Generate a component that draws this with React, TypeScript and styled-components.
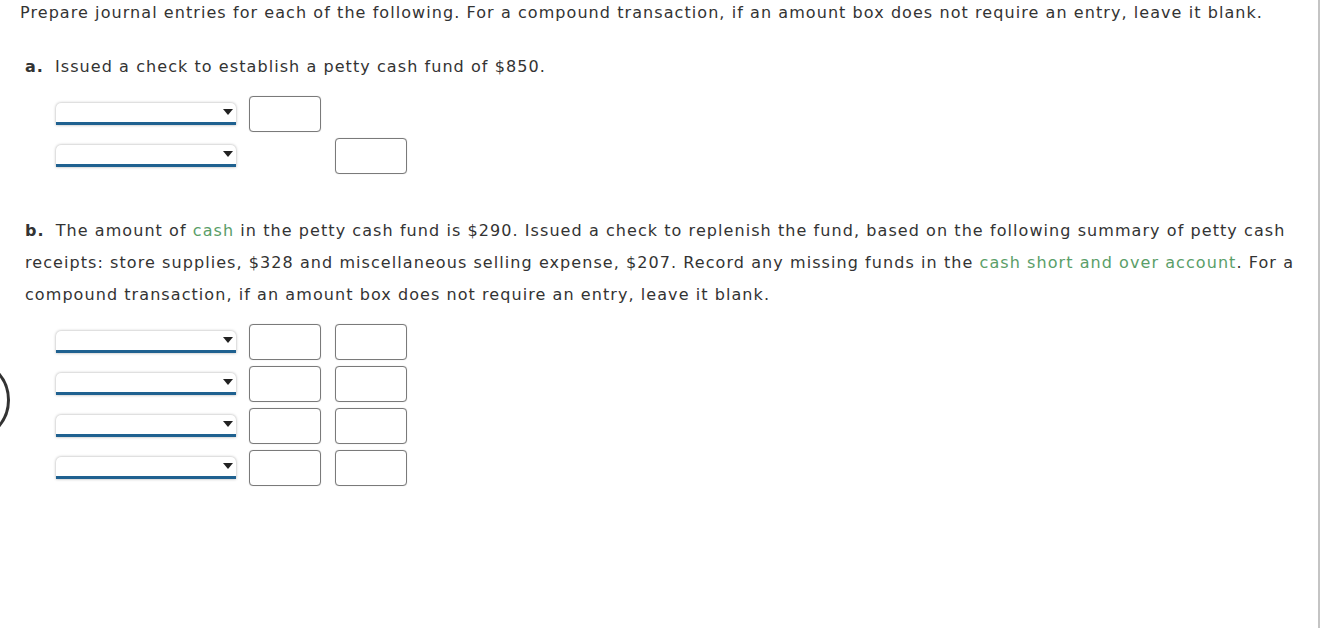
import React from "react";
import styled, { createGlobalStyle } from "styled-components";

const Global = createGlobalStyle`
  html, body { margin: 0; padding: 0; background: #fff; }
  body { font-family: Verdana, "DejaVu Sans", sans-serif; color: #333; }
`;

const Page = styled.div`
  position: relative;
  box-sizing: border-box;
  width: 1320px;
  height: 628px;
  overflow: hidden;
  border-right: 2px solid #c4c4c4;
  padding: 3px 0 0 20px;
`;

const Title = styled.p`
  margin: 0;
  font-size: 16px;
  line-height: 20px;
  letter-spacing: 1.07px;
  white-space: nowrap;
`;

const Section = styled.section<{ $top: number }>`
  margin-top: ${(p) => p.$top}px;
  padding-left: 5px;
`;

const Para = styled.p`
  margin: 0;
  font-size: 16px;
  line-height: 32px;
  letter-spacing: 1.07px;
  width: 1285px;
`;

const Label = styled.b`
  font-weight: bold;
  margin-right: 11px;
`;

const Term = styled.span`
  color: #5a9e68;
`;

const Rows = styled.div`
  margin-top: 13px;
  margin-left: 31px;
  display: flex;
  flex-direction: column;
  gap: 6px;
`;

const Row = styled.div`
  display: grid;
  grid-template-columns: 180px 72px 72px;
  column-gap: 13px;
  align-items: center;
  & > :last-child { margin-left: 1px; }
`;

const SelectBox = styled.div`
  position: relative;
  box-sizing: border-box;
  height: 22px;
  background: #fff;
  border-radius: 5px 5px 0 0;
  box-shadow: 0 0 3px rgba(0, 0, 0, 0.35);
  border-bottom: 3px solid #1f6190;
`;

const Caret = styled.span`
  position: absolute;
  right: 3px;
  top: 6px;
  width: 0;
  height: 0;
  border-left: 5px solid transparent;
  border-right: 5px solid transparent;
  border-top: 6px solid #222;
`;

const Amount = styled.div`
  box-sizing: border-box;
  width: 72px;
  height: 36px;
  border: 1px solid #7a7a7a;
  border-radius: 4px;
  background: #fff;
  box-shadow: 0 0 1px rgba(0, 0, 0, 0.25);
`;

const Empty = styled.div`
  width: 72px;
  height: 36px;
`;

const Ring = styled.div`
  position: absolute;
  left: -74px;
  top: 358px;
  width: 78px;
  height: 78px;
  border: 3px solid #333;
  border-radius: 50%;
`;

type Cell = "amt" | "none";

const JournalRow = ({ debit, credit }: { debit: Cell; credit: Cell }) => (
  <Row>
    <SelectBox>
      <Caret />
    </SelectBox>
    {debit === "amt" ? <Amount /> : <Empty />}
    {credit === "amt" ? <Amount /> : <Empty />}
  </Row>
);

export default function App() {
  return (
    <>
      <Global />
      <Page>
        <Title>
          Prepare journal entries for each of the following. For a compound transaction, if an amount box does not require an entry, leave it blank.
        </Title>
        <Section $top={28}>
          <Para>
            <Label>a.</Label>Issued a check to establish a petty cash fund of $850.
          </Para>
          <Rows>
            <JournalRow debit="amt" credit="none" />
            <JournalRow debit="none" credit="amt" />
          </Rows>
        </Section>
        <Section $top={41}>
          <Para>
            <Label>b.</Label>The amount of <Term>cash</Term> in the petty cash fund is $290. Issued a check to replenish the fund, based on the following summary of petty cash receipts: store supplies, $328 and miscellaneous selling expense, $207. Record any missing funds in the <Term>cash short and over account</Term>. For a compound transaction, if an amount box does not require an entry, leave it blank.
          </Para>
          <Rows>
            <JournalRow debit="amt" credit="amt" />
            <JournalRow debit="amt" credit="amt" />
            <JournalRow debit="amt" credit="amt" />
            <JournalRow debit="amt" credit="amt" />
          </Rows>
        </Section>
        <Ring />
      </Page>
    </>
  );
}
